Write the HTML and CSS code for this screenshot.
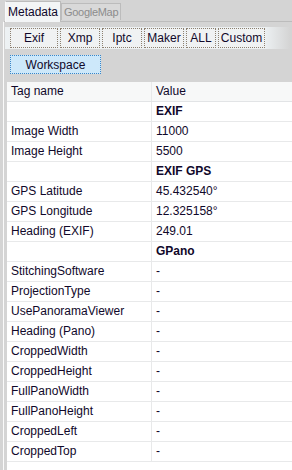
FILE: index.html
```html
<!DOCTYPE html>
<html lang="en">
<head>
    <meta charset="UTF-8">
    <title>Metadata</title>
    <link rel="stylesheet" href="styles.css">
</head>
<body>
    <div class="tabs">
        <div class="tab active">Metadata</div>
        <div class="tab">GoogleMap</div>
    </div>
    <div class="panel">
        <div class="toolbar">
            <button class="btn btn-exif">Exif</button>
            <button class="btn btn-xmp">Xmp</button>
            <button class="btn btn-iptc">Iptc</button>
            <button class="btn btn-maker">Maker</button>
            <button class="btn btn-all">ALL</button>
            <button class="btn btn-custom">Custom</button>
        </div>
        <div class="toolbar2">
            <button class="btn btn-workspace">Workspace</button>
        </div>
        <div class="grid">
            <div class="row head"><div class="cell">Tag name</div><div class="cell">Value</div></div>
            <div class="row"><div class="cell"></div><div class="cell group">EXIF</div></div>
            <div class="row"><div class="cell">Image Width</div><div class="cell">11000</div></div>
            <div class="row"><div class="cell">Image Height</div><div class="cell">5500</div></div>
            <div class="row"><div class="cell"></div><div class="cell group">EXIF GPS</div></div>
            <div class="row"><div class="cell">GPS Latitude</div><div class="cell">45.432540°</div></div>
            <div class="row"><div class="cell">GPS Longitude</div><div class="cell">12.325158°</div></div>
            <div class="row"><div class="cell">Heading (EXIF)</div><div class="cell">249.01</div></div>
            <div class="row"><div class="cell"></div><div class="cell group">GPano</div></div>
            <div class="row"><div class="cell">StitchingSoftware</div><div class="cell">-</div></div>
            <div class="row"><div class="cell">ProjectionType</div><div class="cell">-</div></div>
            <div class="row"><div class="cell">UsePanoramaViewer</div><div class="cell">-</div></div>
            <div class="row"><div class="cell">Heading (Pano)</div><div class="cell">-</div></div>
            <div class="row"><div class="cell">CroppedWidth</div><div class="cell">-</div></div>
            <div class="row"><div class="cell">CroppedHeight</div><div class="cell">-</div></div>
            <div class="row"><div class="cell">FullPanoWidth</div><div class="cell">-</div></div>
            <div class="row"><div class="cell">FullPanoHeight</div><div class="cell">-</div></div>
            <div class="row"><div class="cell">CroppedLeft</div><div class="cell">-</div></div>
            <div class="row"><div class="cell">CroppedTop</div><div class="cell">-</div></div>
        </div>
    </div>
</body>
</html>
```

FILE: styles.css
```css
body {
    margin: 0;
    background: #d4d4d4;
    font-family: "Liberation Sans", Arial, sans-serif;
    font-size: 12px;
    color: #10082a;
    overflow: hidden;
}

.tabs {
    display: flex;
    align-items: flex-end;
    height: 21px;
    padding-left: 5px;
    box-sizing: border-box;
}

.tab {
    height: 17px;
    line-height: 16px;
    padding: 0 2px;
    border: 1px solid #bcbcbc;
    border-bottom: none;
    background: #d9d9d9;
    color: #8c8c8c;
    font-size: 11px;
    letter-spacing: -0.3px;
    box-sizing: border-box;
    margin-bottom: 1px;
}

.tab.active {
    height: 21px;
    line-height: 21px;
    padding: 0 2px;
    margin-bottom: -1px;
    background: #f3f5f6;
    border-left-color: #fafafa;
    color: #10082a;
    font-size: 12px;
    letter-spacing: 0;
    position: relative;
    z-index: 1;
}

.panel {
    margin-left: 3px;
    border-left: 1px solid #fafafa;
    border-top: 1px solid #bcbcbc;
    padding-top: 5px;
}

.toolbar {
    display: flex;
    gap: 2px;
    margin-left: 1px;
    width: 280px;
    padding: 1px 0 1px 5px;
    background: linear-gradient(90deg, #edf1f3 91%, #d4d4d4 100%);
}

.btn {
    font-family: inherit;
    font-size: 12px;
    color: #10082a;
    height: 20px;
    padding: 0;
    margin: 0;
    border: 1px dotted #8c8070;
    background: #f0f2f3;
}

.btn-exif { width: 48px; }
.btn-xmp { width: 40px; }
.btn-iptc { width: 40px; }
.btn-maker { width: 40px; }
.btn-all { width: 30px; }
.btn-custom { width: 47px; }

.toolbar2 {
    padding: 6px 0 0 6px;
    height: 33px;
    box-sizing: border-box;
}

.btn-workspace {
    width: 91px;
    height: 19px;
    background: #cde8fa;
    border-color: #3a86c8;
}

.grid {
    margin-left: 3px;
    background: #fff;
    min-height: calc(100vh - 81px);
}

.row {
    display: grid;
    grid-template-columns: 144px 1fr;
    height: 20px;
    border-bottom: 1px solid #e8e9ea;
    box-sizing: border-box;
}

.row.head {
    background: #f7f8f8;
    border-bottom-color: #e2e4e6;
}

.cell {
    padding-left: 4px;
    line-height: 19px;
    white-space: nowrap;
}

.cell + .cell {
    border-left: 1px solid #e8e9ea;
    padding-left: 4px;
}

.group {
    font-weight: bold;
}
```
